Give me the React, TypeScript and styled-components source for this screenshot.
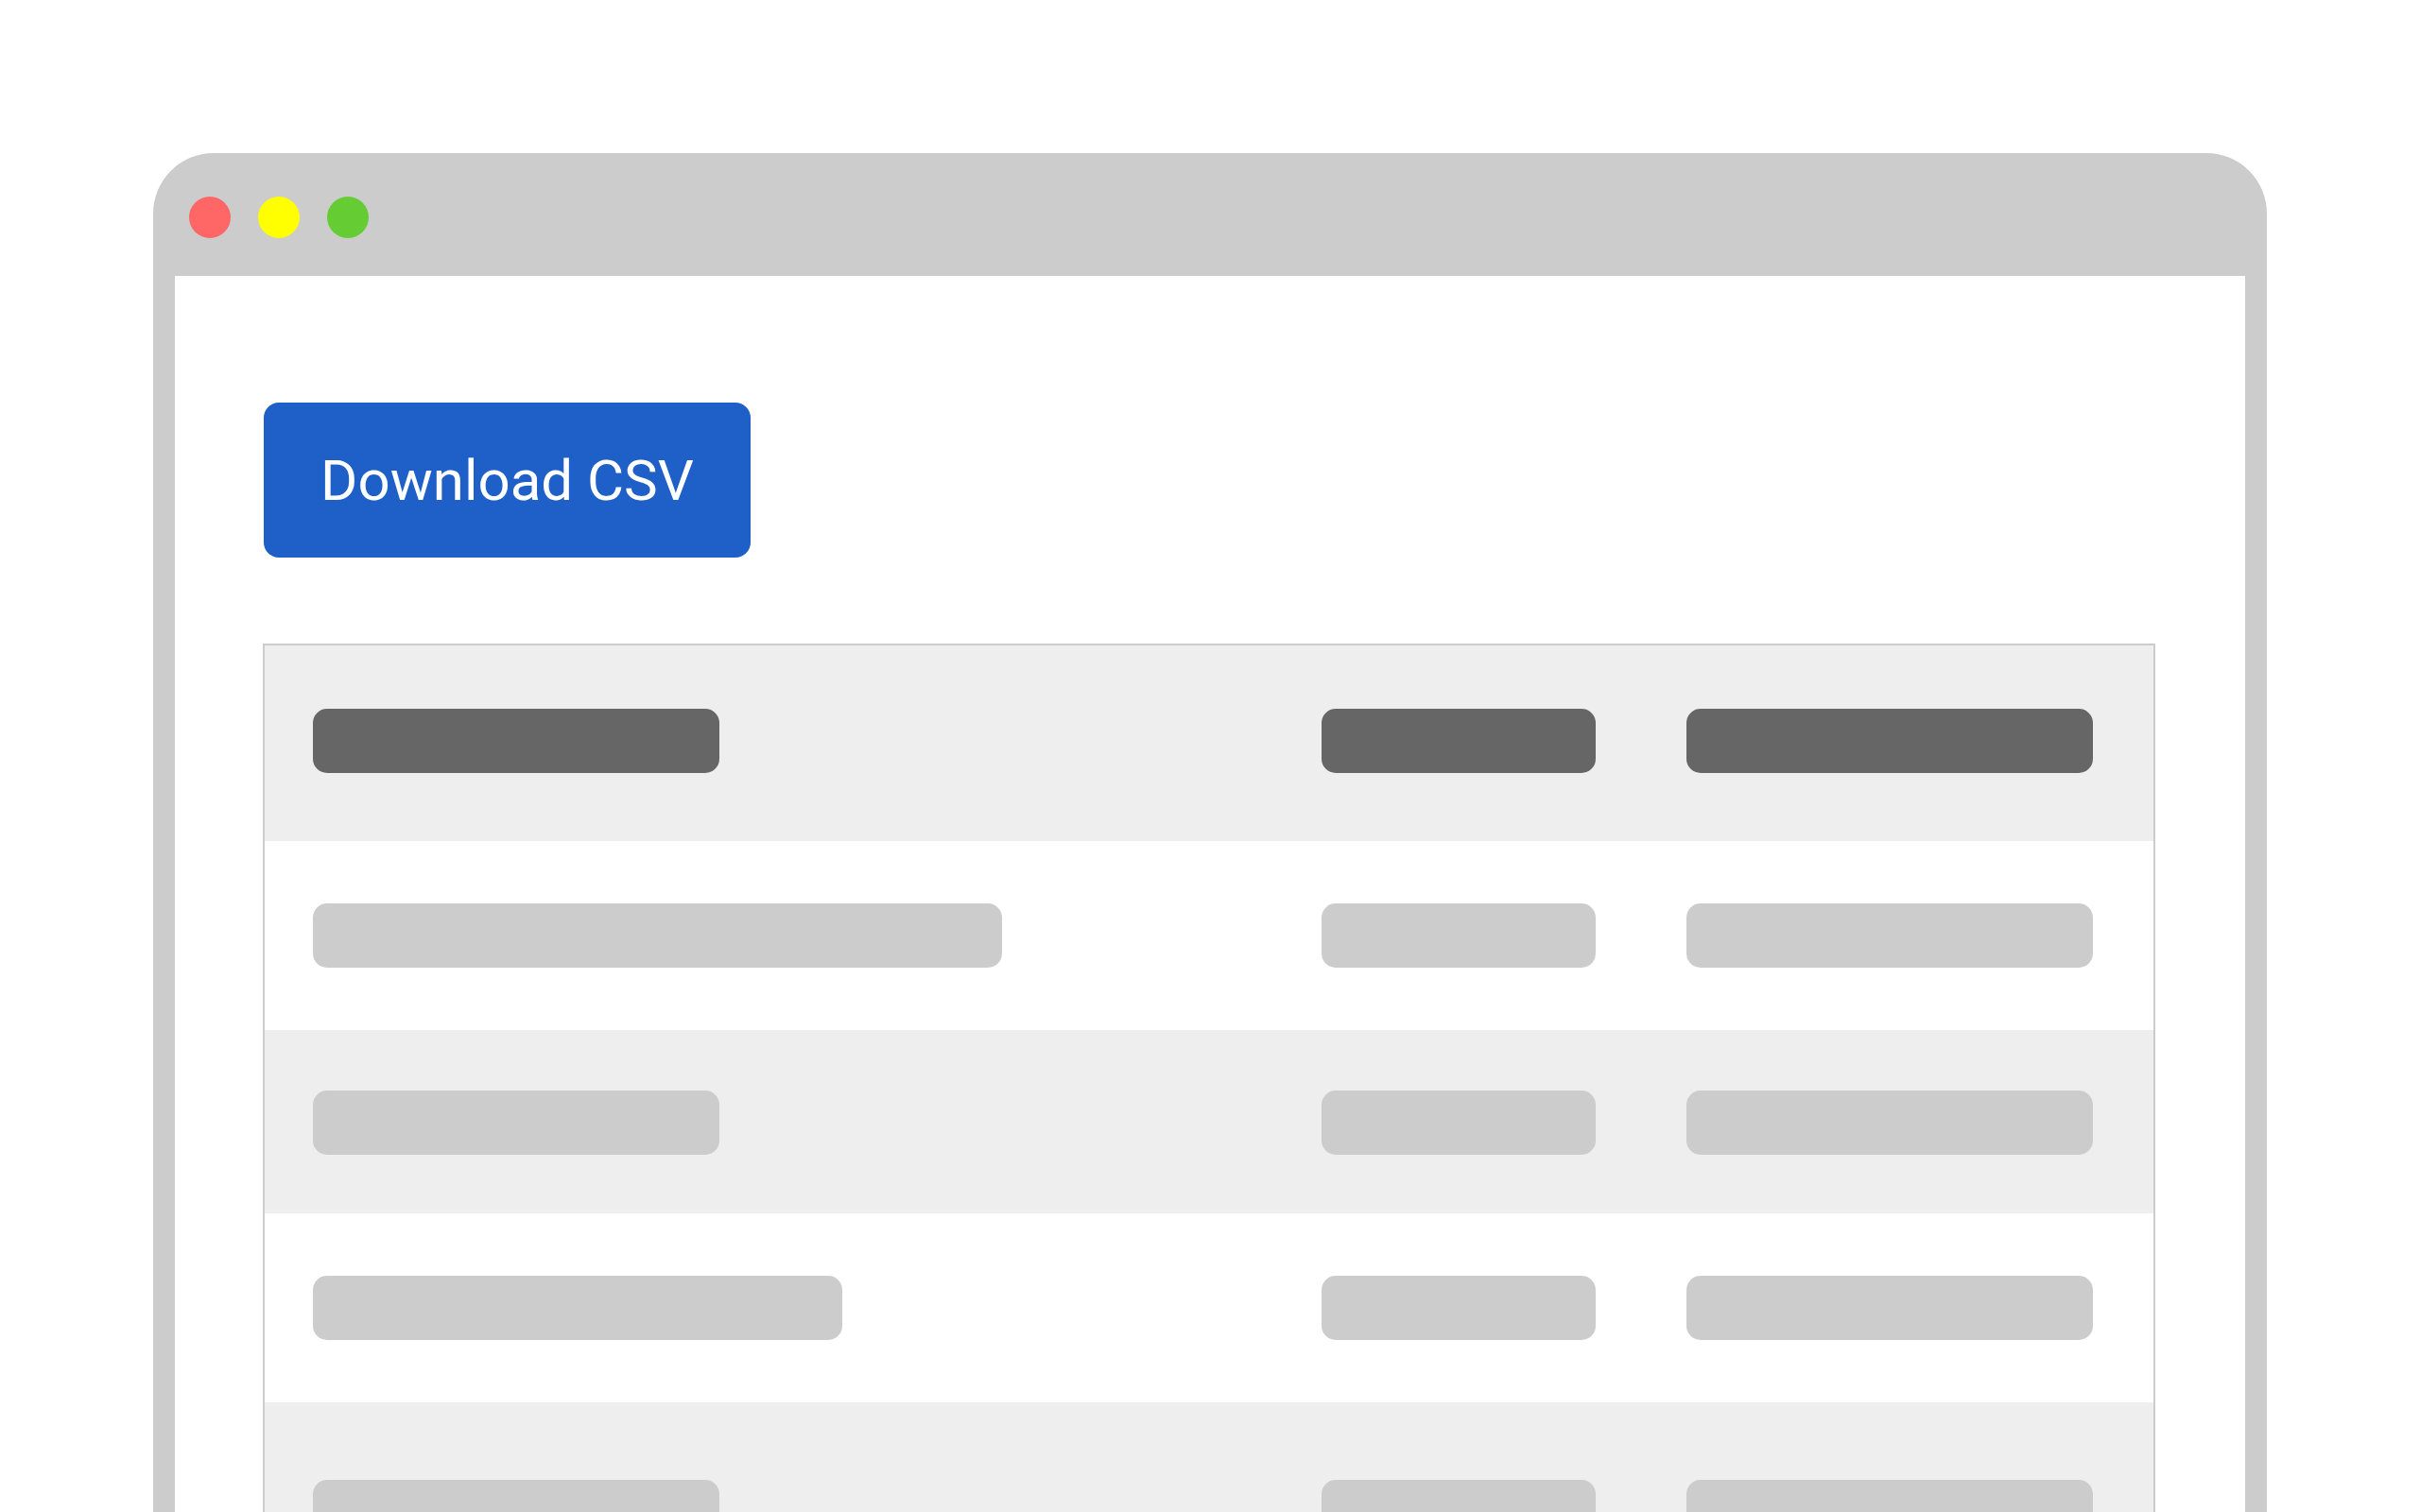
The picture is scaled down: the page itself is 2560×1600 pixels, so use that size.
import React from "react";
import styled, { createGlobalStyle } from "styled-components";

const GlobalStyle = createGlobalStyle`
  html, body {
    margin: 0;
    padding: 0;
    background: #ffffff;
  }
  #root {
    height: 1600px;
    overflow: hidden;
  }
`;

const Page = styled.div`
  padding: 162px 162px 0;
`;

const Frame = styled.div`
  width: 2236px;
  height: 1500px;
  background: #cccccc;
  border-radius: 64px 64px 0 0;
  display: flex;
  flex-direction: column;
  box-sizing: border-box;
  padding: 0 23px;
  overflow: hidden;
`;

const TitleBar = styled.div`
  flex-shrink: 0;
  height: 130px;
  display: flex;
  gap: 29px;
  padding: 46px 0 0 15px;
  box-sizing: border-box;
`;

const Dot = styled.span<{ $color: string }>`
  width: 44px;
  height: 44px;
  border-radius: 50%;
  background: ${(p) => p.$color};
`;

const Content = styled.div`
  flex: 1 0 auto;
  background: #ffffff;
  padding: 134px 95px 0 93px;
  display: flex;
  flex-direction: column;
  align-items: flex-start;
`;

const DownloadButton = styled.button`
  flex-shrink: 0;
  width: 515px;
  height: 164px;
  margin-left: 1px;
  padding: 0;
  border: none;
  border-radius: 16px;
  background: #1e60c8;
  color: #ffffff;
  font-family: Roboto, "Noto Sans", sans-serif;
  font-size: 60px;
  font-weight: 400;
  cursor: pointer;
`;

const Table = styled.div`
  flex-shrink: 0;
  margin-top: 91px;
  width: 2002px;
  border: 2px solid #cccccc;
  border-bottom: none;
  box-sizing: border-box;
`;

const Row = styled.div<{ $shade: boolean; $top: number; $bottom: number }>`
  display: grid;
  grid-template-columns: 1067px 386px 430px;
  padding: ${(p) => p.$top}px 64px ${(p) => p.$bottom}px 51px;
  background: ${(p) => (p.$shade ? "#eeeeee" : "#ffffff")};
`;

const Bar = styled.div<{ $w: number; $dark?: boolean }>`
  width: ${(p) => p.$w}px;
  height: 68px;
  border-radius: 15px;
  background: ${(p) => (p.$dark ? "#666666" : "#cccccc")};
`;

const rows = [
  { first: 430, top: 67, bottom: 72, dark: true },
  { first: 729, top: 66, bottom: 66 },
  { first: 430, top: 64, bottom: 62 },
  { first: 560, top: 66, bottom: 66 },
  { first: 430, top: 82, bottom: 66 },
];

export default function App() {
  return (
    <>
      <GlobalStyle />
      <Page>
        <Frame>
          <TitleBar>
            <Dot $color="#ff6666" />
            <Dot $color="#ffff00" />
            <Dot $color="#66cc33" />
          </TitleBar>
          <Content>
            <DownloadButton>Download CSV</DownloadButton>
            <Table>
              {rows.map((r, i) => (
                <Row key={i} $shade={i % 2 === 0} $top={r.top} $bottom={r.bottom}>
                  <Bar $w={r.first} $dark={r.dark} />
                  <Bar $w={290} $dark={r.dark} />
                  <Bar $w={430} $dark={r.dark} />
                </Row>
              ))}
            </Table>
          </Content>
        </Frame>
      </Page>
    </>
  );
}
